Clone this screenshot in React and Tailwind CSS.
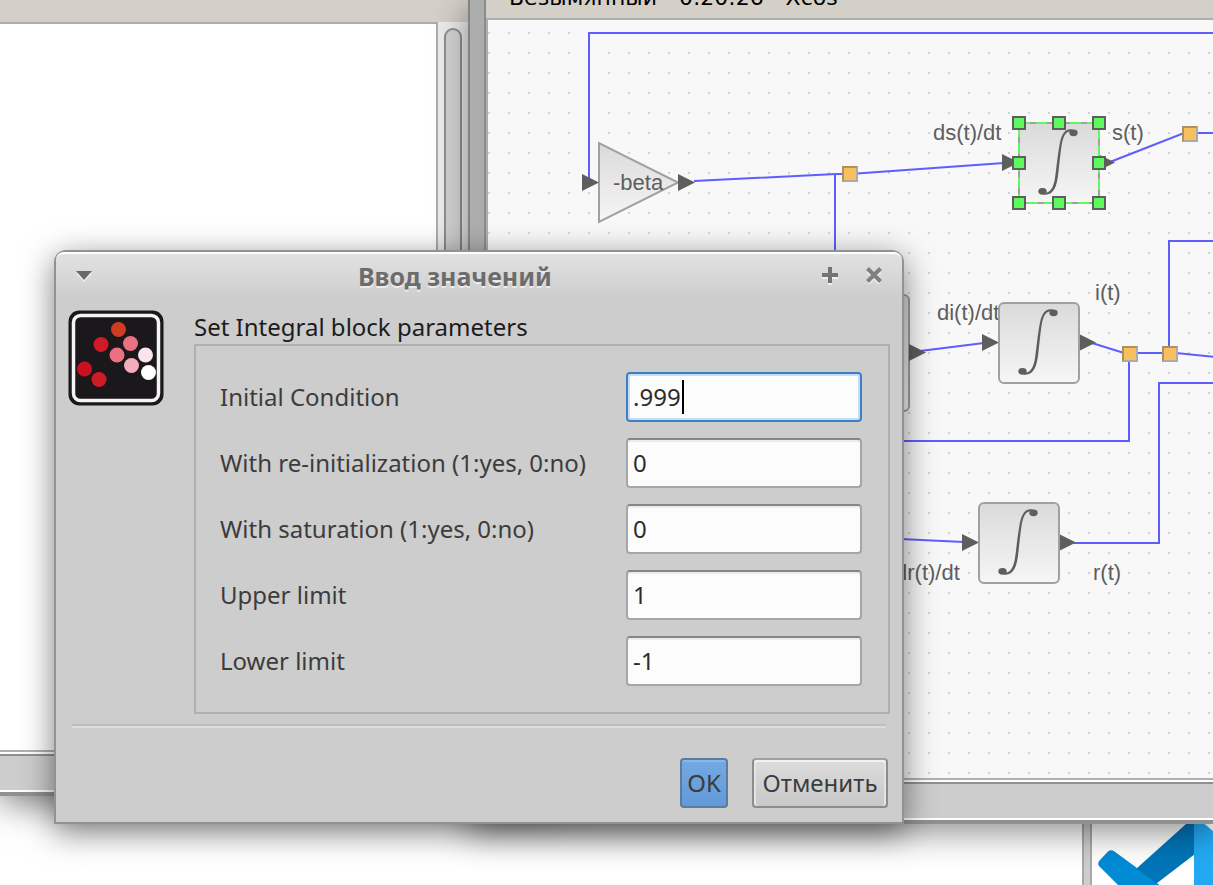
import React from "react";

const FIELDS = [
  { id: "initial", label: "Initial Condition", value: ".999", active: true },
  { id: "reinit", label: "With re-initialization (1:yes, 0:no)", value: "0" },
  { id: "saturation", label: "With saturation (1:yes, 0:no)", value: "0" },
  { id: "upper", label: "Upper limit", value: "1" },
  { id: "lower", label: "Lower limit", value: "-1" },
];

function Port({ x, y }) {
  return <path d={`M${x} ${y - 8.5}v17l17-8.5z`} fill="#5e5e5e" />;
}

function Junction({ x, y }) {
  return (
    <g>
      <rect x={x} y={y} width="16" height="16" fill="#ababab" />
      <path d={`M${x} ${y}h16l-2 2h-12v12l-2 2z`} fill="#ae9160" />
      <rect x={x + 2} y={y + 2} width="12" height="12" fill="#f8bf5e" />
    </g>
  );
}

function IntegralBlock({ x, y, selected }) {
  return (
    <g transform={`translate(${x} ${y})`}>
      <rect x="1" y="1" width="80" height="80" rx={selected ? 0 : 5} fill="url(#block)" stroke="#a0a0a0" strokeWidth="2" />
      {selected && (
        <rect x="1" y="1" width="80" height="80" fill="none" stroke="#5ef95e" strokeWidth="2" strokeDasharray="11 6" />
      )}
      <path
        d="M55 7.5C46 6 43 13 41 26C39 38 38.5 46 37 56C35.5 66 32 71 26 71L26 72.7C36 73.5 38.500 64 40 54C41.500 42 42 34 43.500 24C45 14 48 8.5 53 9.5Z"
        fill="#5e5e5e"
      />
      <ellipse cx="55.500" cy="10.8" rx="4.2" ry="3.4" fill="#5e5e5e" />
      <ellipse cx="24.500" cy="69.3" rx="4.2" ry="3.4" fill="#5e5e5e" />
    </g>
  );
}

const HANDLES = [
  [1012, 116], [1052, 116], [1092, 116],
  [1012, 156], [1092, 156],
  [1012, 196], [1052, 196], [1092, 196],
];

function Diagram() {
  return (
    <svg
      className="block h-full w-[2400px] font-['Liberation_Sans',sans-serif] text-[22px]"
      viewBox="488 20 2400 758"
      preserveAspectRatio="xMinYMin slice"
      role="img"
      aria-label="Xcos"
    >
      <defs>
        <linearGradient id="block" x1="0" y1="0" x2="0" y2="1">
          <stop offset="0" stopColor="#dadada" />
          <stop offset="1" stopColor="#f6f6f6" />
        </linearGradient>
        <pattern id="dots" x="488" y="32" width="20" height="20" patternUnits="userSpaceOnUse">
          <rect width="2" height="2" fill="#d2d2d2" />
        </pattern>
      </defs>
      <rect x="488" y="20" width="2400" height="758" fill="url(#dots)" />
      <g fill="none" stroke="#5e5eff" strokeWidth="2">
        <path d="M589 182V33H2888" />
        <path d="M694 181L836 174H850L1004 163" />
        <path d="M835 174V300" />
        <path d="M1110 162L1184 133H2888" />
        <path d="M920 351L984 343" />
        <path d="M1092 343L1124 353H1176L1216 357" />
        <path d="M1169 350V241H2888" />
        <path d="M1129 358V441H800" />
        <path d="M2888 383H1159V543H1072" />
        <path d="M900 539L964 542" />
      </g>
      <path d="M599 143V222L678 182.500Z" fill="url(#block)" stroke="#a0a0a0" strokeWidth="2" />
      <rect x="829" y="295" width="80" height="116" rx="5" fill="url(#block)" stroke="#a0a0a0" strokeWidth="2" />
      <g fill="#5e5e5e">
        <text x="613" y="190">-beta</text>
        <text x="933" y="140">ds(t)/dt</text>
        <text x="1112" y="140">s(t)</text>
        <text x="937" y="320">di(t)/dt</text>
        <text x="1095" y="300">i(t)</text>
        <text x="895" y="580">dr(t)/dt</text>
        <text x="1093" y="580">r(t)</text>
      </g>
      <Port x={582} y={182.5} />
      <Port x={678} y={182.5} />
      <Port x={1002} y={162.5} />
      <Port x={1098} y={162.5} />
      <Port x={909} y={352.5} />
      <Port x={982} y={342.5} />
      <Port x={1079} y={342.5} />
      <Port x={962} y={542.5} />
      <Port x={1059} y={542.5} />
      <IntegralBlock x={1018} y={122} selected />
      <IntegralBlock x={998} y={302} />
      <IntegralBlock x={978} y={502} />
      <Junction x={842} y={166} />
      <Junction x={1182} y={126} />
      <Junction x={1122} y={346} />
      <Junction x={1162} y={346} />
      {HANDLES.map(([x, y]) => (
        <rect key={`${x}-${y}`} x={x + 1} y={y + 1} width="12" height="12" fill="#5ef95e" stroke="#5e5e5e" strokeWidth="2" />
      ))}
    </svg>
  );
}

function FrameBottom() {
  return (
    <div className="h-[46px] shrink-0 border-t-2 border-b-4 border-t-[#b0b0b0] border-b-[#909090] bg-white py-[2px]">
      <div className="h-9 border-t-2 border-[#909090] bg-[#cdcdcd]" />
    </div>
  );
}

function LeftWindow() {
  return (
    <section className="absolute top-0 left-0 flex h-[796px] w-[560px] flex-col bg-[#cdcdcd] shadow-[0_8px_32px_rgba(0,0,0,0.5)]">
      <div className="h-[22px] shrink-0 bg-[#d4d0c8]" />
      <div className="flex min-h-0 w-[468px] flex-1 bg-[#ececec]">
        <div className="flex-1 border-t-2 border-r-2 border-[#adadad] bg-white" />
        <div className="w-[30px] rounded-tl-lg bg-[#ececec] pt-[6px] pl-[6px]">
          <div className="h-[640px] w-[18px] rounded-full border-2 border-[#909090] bg-linear-to-r from-[#d2d2d2] to-[#dcdcdc]" />
        </div>
      </div>
      <FrameBottom />
    </section>
  );
}

function EditorWindow() {
  return (
    <section className="absolute top-0 right-0 left-[468px] flex h-[824px] flex-col bg-[#adadad] shadow-[0_8px_32px_rgba(0,0,0,0.45)]">
      <div className="flex min-h-0 flex-1">
        <div className="w-[18px] shrink-0 border-r-2 border-l-2 border-r-[#8c8c8c] border-l-[#828282] bg-[#adadad]" />
        <div className="flex min-w-0 flex-1 flex-col">
          <div className="relative h-[18px] shrink-0 overflow-hidden bg-[#d4d0c8]">
            <h2 className="absolute bottom-2 left-3 font-['DejaVu_Sans',sans-serif] text-[22px] leading-6 whitespace-pre text-black">
              *Безымянный - 0:20:26 - Xcos
            </h2>
          </div>
          <div className="min-h-0 flex-1 overflow-hidden border-t-2 border-l-2 border-[#adadad] bg-[#f8f8f8]">
            <Diagram />
          </div>
        </div>
      </div>
      <FrameBottom />
    </section>
  );
}

function CodeWindow() {
  return (
    <section className="absolute right-0 bottom-0 flex h-[80px] w-[131px] bg-white">
      <div className="w-[10px] shrink-0 border-x-2 border-[#a8a8a8] bg-[#cdcdcd]" />
      <svg className="h-20 w-[121px]" viewBox="1092 805 121 80" aria-hidden="true">
        <path d="M1099 866Q1097 863 1100 860L1108 851.500Q1111 849 1114.500 851.500L1137 868L1162 887H1120Z" fill="#008bd5" />
        <path d="M1136.500 868.500L1186 824L1195 816V854L1156.500 883.500Z" fill="#0075b8" />
        <path d="M1194 815L1213 831V885H1194Z" fill="#23a9f2" />
      </svg>
    </section>
  );
}

function AppIcon() {
  return (
    <svg className="h-24 w-24 shrink-0" viewBox="0 0 96 96" aria-hidden="true">
      <rect x="0.500" y="0.500" width="95" height="95" rx="11" fill="#1b181b" />
      <rect x="5.500" y="5.500" width="85" height="85" rx="7" fill="none" stroke="#f4f4f4" strokeWidth="3.500" />
      <circle cx="50.500" cy="19.500" r="7.500" fill="#d03c22" />
      <circle cx="33" cy="34.500" r="7.500" fill="#cf1b26" />
      <circle cx="62.500" cy="33.500" r="7.500" fill="#eb7080" />
      <circle cx="49" cy="45" r="7.500" fill="#eb7080" />
      <circle cx="77.500" cy="45" r="7.500" fill="#f9e4ec" />
      <circle cx="63.500" cy="55.500" r="7.500" fill="#f4adbd" />
      <circle cx="80.500" cy="62.500" r="7.500" fill="#ffffff" />
      <circle cx="16.500" cy="59" r="7.500" fill="#cc1020" />
      <circle cx="31" cy="69.500" r="7.500" fill="#cf1b26" />
    </svg>
  );
}

function TitleBar() {
  return (
    <header className="flex h-[46px] shrink-0 items-center rounded-t-lg border-t-2 border-white bg-linear-to-b from-[#e2e2e2] to-[#cdcdcd] px-5">
      <button type="button" aria-label="Menu" className="flex h-6 w-4 items-center">
        <svg className="h-3 w-4" viewBox="0 0 16 12" aria-hidden="true">
          <path d="M0 3h16l-8 9z" fill="#f0f0f0" />
          <path d="M0 1h16l-8 9z" fill="#696969" />
        </svg>
      </button>
      <h1 className="flex-1 text-center text-[25px] leading-8 font-bold text-[#6c6c6c] [text-shadow:0_2px_0_#ececec]">
        Ввод значений
      </h1>
      <div className="flex w-[64px] justify-end gap-7">
        <button type="button" aria-label="Maximize">
          <svg className="h-[18px] w-4" viewBox="0 0 16 18" aria-hidden="true">
            <path d="M8 2v16M0 10h16" stroke="#f0f0f0" strokeWidth="4" />
            <path d="M8 0v16M0 8h16" stroke="#747474" strokeWidth="4" />
          </svg>
        </button>
        <button type="button" aria-label="Close">
          <svg className="h-[18px] w-4" viewBox="0 0 16 18" aria-hidden="true">
            <path d="M2 4l12 12M14 4L2 16" stroke="#f0f0f0" strokeWidth="4" />
            <path d="M1.500 1.500l13 13M14.500 1.500l-13 13" stroke="#808080" strokeWidth="4" />
          </svg>
        </button>
      </div>
    </header>
  );
}

function Field({ id, label, value, active }) {
  return (
    <div className="flex items-center">
      <label htmlFor={id} className="flex-1 text-[#3c3c3c]">
        {label}
      </label>
      <div className="relative w-[236px]">
        <input
          id={id}
          type="text"
          defaultValue={value}
          className={
            active
              ? "block h-[50px] w-full rounded border-2 border-[#3b7fc4] bg-[#fcfcfc] px-[5px] pb-[2px] text-[#2c2c2c] shadow-[inset_0_0_0_2px_#c4dcf4] outline-none"
              : "block h-[50px] w-full rounded border-2 border-[#a6a6a6] border-t-[#868686] bg-[#fcfcfc] px-[5px] pb-[2px] text-[#2c2c2c] shadow-[inset_0_2px_0_#ececec] outline-none"
          }
        />
        {active && <span className="absolute top-2 left-14 h-[34px] w-[2px] bg-black" />}
      </div>
    </div>
  );
}

function Dialog() {
  return (
    <form
      onSubmit={(e) => e.preventDefault()}
      className="absolute top-[250px] left-[54px] flex w-[850px] flex-col rounded-t-xl border-2 border-[#929292] bg-[#cdcdcd] text-2xl leading-[34px] shadow-[0_8px_32px_rgba(0,0,0,0.5)]"
    >
      <TitleBar />
      <div className="flex gap-[30px] px-3 pt-3">
        <AppIcon />
        <div className="flex-1">
          <p className="text-[#1c1c1c]">Set Integral block parameters</p>
          <div className="flex flex-col gap-4 border-2 border-[#b0b0b0] py-[26px] pr-[26px] pl-6">
            {FIELDS.map((f) => (
              <Field key={f.id} {...f} />
            ))}
          </div>
        </div>
      </div>
      <div className="mx-4 mt-[10px] h-1 border-t-2 border-[#bebebe] bg-[#dcdcdc]" />
      <div className="flex justify-end gap-6 px-[14px] pt-[30px] pb-[14px] text-[#3c3c3c]">
        <button
          type="submit"
          className="h-[50px] w-12 rounded border-2 border-[#5c7c9e] bg-linear-to-b from-[#74a8e2] to-[#629ad8] shadow-[inset_0_2px_0_#86b8ec]"
        >
          OK
        </button>
        <button
          type="button"
          className="h-[50px] w-[136px] rounded border-2 border-[#8c8c8c] border-t-[#a0a0a0] bg-linear-to-b from-[#dcdcdc] to-[#c8c8c8] shadow-[inset_0_2px_0_#f2f2f2,inset_2px_0_0_#e4e4e4,inset_-2px_0_0_#e4e4e4]"
        >
          Отменить
        </button>
      </div>
    </form>
  );
}

export default function App() {
  return (
    <main className="relative h-screen overflow-hidden bg-white font-['Noto_Sans',sans-serif]">
      <CodeWindow />
      <LeftWindow />
      <EditorWindow />
      <Dialog />
    </main>
  );
}
